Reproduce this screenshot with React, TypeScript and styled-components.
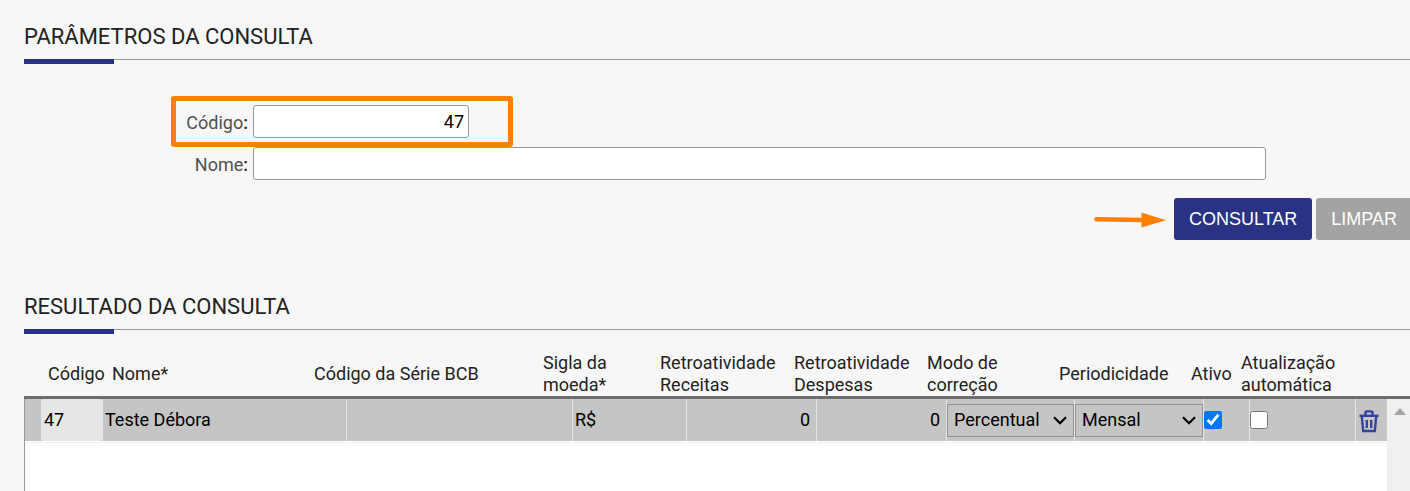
import React from "react";
import styled, { createGlobalStyle } from "styled-components";

const GlobalStyle = createGlobalStyle`
  * { box-sizing: border-box; }
  body {
    margin: 0;
    background: #f7f7f7;
    color: #222;
    font-family: Roboto, "Liberation Sans", sans-serif;
    font-size: 18px;
    line-height: 22px;
  }
`;

const Page = styled.main`
  display: flex;
  flex-direction: column;
  min-height: 100vh;
  padding-left: 24px;
`;

const SectionTitle = styled.h2`
  position: relative;
  margin: 0;
  padding: 23px 0 8px;
  border-bottom: 1px solid #999;
  font-size: 22px;
  font-weight: 400;
  line-height: 28px;

  &::after {
    content: "";
    position: absolute;
    left: 0;
    top: 100%;
    width: 90px;
    height: 5px;
    background: #2a3283;
  }
`;

const QueryForm = styled.form`
  display: flex;
  flex-direction: column;
  padding: 45px 0 30px;
`;

const Field = styled.div`
  position: relative;
  display: grid;
  grid-template-columns: 224px minmax(0, 1fr);
  column-gap: 5px;
  align-items: center;
  margin: 0 144px 9px 0;
`;

const FieldLabel = styled.label`
  padding-top: 2px;
  color: #505050;
  text-align: right;

  &::after {
    content: ":";
    color: #222;
    font-weight: 500;
  }
`;

const TextInput = styled.input<{ $width?: string; $align?: string }>`
  width: ${(p) => p.$width ?? "100%"};
  height: 33px;
  padding: 0 4px;
  border: 1px solid #999;
  border-radius: 3px;
  background: #fff;
  color: #000;
  font: inherit;
  text-align: ${(p) => p.$align ?? "left"};
`;

const Highlight = styled.span`
  position: absolute;
  z-index: 1;
  left: 147px;
  top: -9px;
  width: 342px;
  height: 51px;
  border: 5px solid #ff8000;
  border-radius: 3px;
  pointer-events: none;
`;

const Actions = styled.div`
  display: flex;
  justify-content: flex-end;
  align-items: center;
  gap: 4px;
  margin-top: 9px;
`;

const Pointer = styled.svg`
  margin: 2px 4px 0 0;
`;

const ActionButton = styled.button<{ $primary?: boolean }>`
  height: 42px;
  padding: ${(p) => (p.$primary ? "0 15px" : "0 13px 0 15px")};
  border: 0;
  border-radius: ${(p) => (p.$primary ? "3px" : "3px 0 0 3px")};
  background: ${(p) => (p.$primary ? "#2a3283" : "#a3a3a3")};
  color: #fff;
  font-family: "Liberation Sans", Arial, sans-serif;
  font-size: 18px;
`;

const GridFrame = styled.div`
  position: relative;
  display: flex;
  flex: 1;
  flex-direction: column;
  margin-top: 22px;
`;

const ResultTable = styled.table`
  display: flex;
  flex: 1;
  flex-direction: column;
`;

const TableHead = styled.thead`
  display: block;
  border-bottom: 3px solid #6c6e6c;
`;

const HeadRow = styled.tr`
  display: grid;
  grid-template-columns: 64px minmax(60px, 1fr) 229px 117px 134px 133px 132px 132px 50px 169px;
  align-items: center;
  height: 44px;
  padding-left: 24px;
`;

const HeadCell = styled.th`
  padding: 0;
  font-weight: 400;
  text-align: left;
`;

const TableBody = styled.tbody`
  display: block;
  flex: 1;
  min-height: 92px;
  padding-right: 23px;
  border-left: 1px solid #999;
  background: #fff;
`;

const BodyRow = styled.tr`
  display: grid;
  grid-template-columns: 16px 62px minmax(102px, 1fr) 226px 114px 130px 130px 128px 129px 46px 106px 31px;
  height: 42px;
  background: #c5c5c5;
  box-shadow: 0 1px #fff, 0 2px #eee;
`;

const Cell = styled.td<{ $plain?: boolean }>`
  display: flex;
  align-items: center;
  min-width: 0;
  padding: 0;
  border-right: ${(p) => (p.$plain ? "0" : "1px solid #e6e6e6")};
`;

const CellInput = styled.input<{ $align?: string }>`
  width: 100%;
  height: 100%;
  padding: 0 6px 2px 2px;
  border: 0;
  border-radius: 3px;
  background: transparent;
  color: #000;
  font: inherit;
  text-align: ${(p) => p.$align ?? "left"};

  &:read-only {
    padding-left: 3px;
    background: #e6e6e6;
  }
`;

const SelectBox = styled.div`
  display: grid;
  width: 100%;
  align-items: center;

  > * { grid-area: 1 / 1; }
`;

const CellSelect = styled.select`
  appearance: none;
  width: 100%;
  height: 33px;
  padding: 0 24px 0 6px;
  border: 1px solid #929292;
  border-radius: 0;
  background-color: #c5c5c5;
  color: #000;
  font: inherit;
`;

const Chevron = styled.svg`
  justify-self: end;
  margin-right: 7px;
  pointer-events: none;
`;

const Tick = styled.input`
  width: 18px;
  height: 18px;
  margin: 0;
`;

const DeleteButton = styled.button`
  display: flex;
  margin: 2px 0 0 3px;
  padding: 0;
  border: 0;
  background: none;
`;

const ScrollTrack = styled.div`
  position: absolute;
  top: 47px;
  right: 0;
  bottom: 0;
  display: flex;
  justify-content: center;
  width: 23px;
  padding: 9px 0 0 2px;
  background: #f0f0f0;
`;

const headings = [
  ["Código"],
  ["Nome*"],
  ["Código da Série BCB"],
  ["Sigla da", "moeda*"],
  ["Retroatividade", "Receitas"],
  ["Retroatividade", "Despesas"],
  ["Modo de", "correção"],
  ["Periodicidade"],
  ["Ativo"],
  ["Atualização", "automática"],
];

function DropDown({ label, value }: { label: string; value: string }) {
  return (
    <SelectBox>
      <CellSelect aria-label={label} defaultValue={value}>
        <option>{value}</option>
      </CellSelect>
      <Chevron width="14" height="9" viewBox="0 0 14 9" fill="none" stroke="#000" strokeWidth="2.2" aria-hidden="true">
        <path d="M1 1.3L7 7.3L13 1.3" />
      </Chevron>
    </SelectBox>
  );
}

function TrashIcon() {
  return (
    <svg width="20" height="23" viewBox="0 0 20 23" fill="none" stroke="#3442a0" strokeWidth="2.4">
      <path d="M6.5 5V2.4Q6.5 1.4 7.5 1.4H12.5Q13.5 1.4 13.5 2.4V5" />
      <path d="M0.5 5.8H19.5" />
      <path d="M2.8 6.5L4.2 21H15.8L17.2 6.5" />
      <path d="M7.8 10V18M12.2 10V18" />
    </svg>
  );
}

export default function App() {
  return (
    <>
      <GlobalStyle />
      <Page>
        <SectionTitle>PARÂMETROS DA CONSULTA</SectionTitle>
        <QueryForm onSubmit={(e) => e.preventDefault()}>
          <Field>
            <FieldLabel htmlFor="codigo">Código</FieldLabel>
            <TextInput id="codigo" $width="216px" $align="right" defaultValue="47" />
            <Highlight />
          </Field>
          <Field>
            <FieldLabel htmlFor="nome">Nome</FieldLabel>
            <TextInput id="nome" />
          </Field>
          <Actions>
            <Pointer width="72" height="16" viewBox="0 0 72 16" aria-hidden="true">
              <path d="M2.5 7.2L49 8" stroke="#ff8000" strokeWidth="4.6" strokeLinecap="round" />
              <path d="M47.5 0.5L72 8.3L47.5 15.5Z" fill="#ff8000" />
            </Pointer>
            <ActionButton type="submit" $primary>CONSULTAR</ActionButton>
            <ActionButton type="reset">LIMPAR</ActionButton>
          </Actions>
        </QueryForm>

        <SectionTitle>RESULTADO DA CONSULTA</SectionTitle>
        <GridFrame>
          <ResultTable>
            <TableHead>
              <HeadRow>
                {headings.map((lines, i) => (
                  <HeadCell key={i} scope="col">
                    {lines[0]}
                    {lines[1] && <br />}
                    {lines[1]}
                  </HeadCell>
                ))}
              </HeadRow>
            </TableHead>
            <TableBody>
              <BodyRow>
                <Cell $plain />
                <Cell><CellInput aria-label="Código" readOnly value="47" /></Cell>
                <Cell><CellInput aria-label="Nome" defaultValue="Teste Débora" /></Cell>
                <Cell><CellInput aria-label="Código da Série BCB" /></Cell>
                <Cell><CellInput aria-label="Sigla da moeda" defaultValue="R$" /></Cell>
                <Cell><CellInput aria-label="Retroatividade Receitas" $align="right" defaultValue="0" /></Cell>
                <Cell><CellInput aria-label="Retroatividade Despesas" $align="right" defaultValue="0" /></Cell>
                <Cell><DropDown label="Modo de correção" value="Percentual" /></Cell>
                <Cell><DropDown label="Periodicidade" value="Mensal" /></Cell>
                <Cell><Tick type="checkbox" aria-label="Ativo" defaultChecked /></Cell>
                <Cell><Tick type="checkbox" aria-label="Atualização automática" /></Cell>
                <Cell $plain>
                  <DeleteButton type="button" aria-label="Excluir"><TrashIcon /></DeleteButton>
                </Cell>
              </BodyRow>
            </TableBody>
          </ResultTable>
          <ScrollTrack aria-hidden="true">
            <svg width="12" height="7" viewBox="0 0 12 7">
              <path d="M0 7L6 0L12 7Z" fill="#a3a3a3" />
            </svg>
          </ScrollTrack>
        </GridFrame>
      </Page>
    </>
  );
}
